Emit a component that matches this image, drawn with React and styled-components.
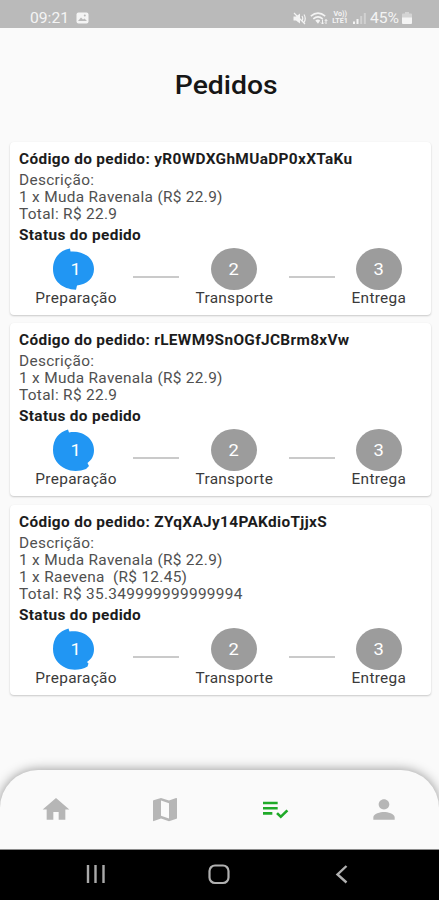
import React from "react";
import styled, { createGlobalStyle } from "styled-components";
import { MdHome, MdMap, MdPlaylistAddCheck, MdPerson } from "react-icons/md";

const GlobalStyle = createGlobalStyle`
  * { box-sizing: border-box; }
  body { margin: 0; background: #fafafa; font-family: Roboto, sans-serif; }
`;

const Screen = styled.div`
  display: flex;
  flex-direction: column;
  height: 900px;
  overflow: hidden;
  background: #fafafa;
`;

const StatusBar = styled.header`
  display: flex;
  justify-content: space-between;
  height: 28px;
  padding: 8px 27px 0 30px;
  background: #bababa;
  color: #f4f4f4;
  flex: none;
`;

const StatusGroup = styled.div`
  display: flex;
  align-items: center;
  height: 20px;
  gap: ${(p) => p.$gap}px;
`;

const StatusText = styled.span`
  width: ${(p) => p.$width}px;
  font-size: 14px;
  line-height: 20px;
  white-space: nowrap;

  span {
    display: inline-block;
    transform: scaleX(1.12);
    transform-origin: left;
  }
`;

const Heading = styled.h1`
  flex: none;
  margin: 0;
  padding: 41px 0 0 13px;
  height: 114px;
  font-size: 26px;
  font-weight: 500;
  line-height: 32px;
  text-align: center;
  color: #161616;

  span {
    display: inline-block;
    transform: scaleX(1.09);
  }
`;

const OrderList = styled.main`
  display: flex;
  flex-direction: column;
  gap: 8.4px;
  flex: 1;
  padding: 0 8px 0 10px;
`;

const OrderCard = styled.article`
  padding: 8px 9px 8px;
  border-radius: 4px;
  background: #fff;
  box-shadow: 0 1px 2px rgba(0, 0, 0, 0.2), 0 0 1px rgba(0, 0, 0, 0.04);
`;

const Line = styled.p`
  margin: 0;
  height: ${(p) => (p.$strong ? 18 : 17)}px;
  font-size: 14px;
  font-weight: ${(p) => (p.$strong ? 700 : 400)};
  line-height: ${(p) => (p.$strong ? 18 : 17)}px;
  letter-spacing: ${(p) => (p.$strong ? 0.3 : 0.28)}px;
  white-space: pre;
  color: ${(p) => (p.$strong ? "#1c1c1c" : "#505050")};
  transform: scaleX(1.1);
  transform-origin: left;
`;

const Details = styled.div`
  padding: 4px 0 3px;
`;

const Steps = styled.div`
  display: flex;
  gap: 16px;
  padding: 4px 0 0 16px;
`;

const Step = styled.div`
  display: flex;
  flex-direction: column;
  align-items: center;
  width: ${(p) => p.$width}px;
`;

const Disc = styled.div`
  display: grid;
  place-items: center;
  width: 46px;
  height: 42px;
  border-radius: 50%;
  background: ${(p) => (p.$active ? "none" : "#9c9c9c")};
  color: #fff;

  > * { grid-area: 1 / 1; }
`;

const DiscNumber = styled.span`
  z-index: 1;
  font-size: 17px;
  line-height: 20px;
  transform: scaleX(1.08);
`;

const StepLabel = styled.span`
  font-size: 14px;
  line-height: 17px;
  letter-spacing: 0.28px;
  white-space: nowrap;
  color: #3a3a3a;
  transform: scaleX(1.1);
`;

const Connector = styled.div`
  width: 46px;
  height: 2px;
  margin-top: 28px;
  background: #cacaca;
`;

const TabBar = styled.nav`
  display: grid;
  grid-template-columns: repeat(4, 1fr);
  place-items: center;
  flex: none;
  height: 80px;
  padding: 0 0 1px 1px;
  border-bottom: 1px solid #8c8c8c;
  border-radius: 38px 38px 0 0;
  background: #fafafa;
  box-shadow: 0 0 12px rgba(0, 0, 0, 0.42);
`;

const Tab = styled.div`
  display: flex;
  color: ${(p) => (p.$active ? "#1faa28" : "#b6b6b6")};

  svg { width: 32px; height: 31px; }
`;

const SystemBar = styled.footer`
  z-index: 1;
  display: flex;
  flex: none;
  gap: 102px;
  height: 50px;
  padding: 14px 0 0 86px;
  background: #000;
`;

const blobs = [
  "M17 .5 L17.5 3.5 C30 2.5 41 9.5 41 21 C41 30 34 36.5 24 37.5 L23 41.8 C9 41 0 33 0 21 C0 10 7 2 17 .5Z",
  "M15 .5 L16 3.5 C29 1 41 9 41 21 C41 27 38.5 31 34.5 34 L36 37 L33 40 C27 42.5 18 42.5 13 40 C5 36.5 0 30 0 21 C0 10 6 3 15 .5Z",
  "M15.5 .5 L16.5 3.5 C29 1.5 41 9 41 21 C41 27 38.5 31 34 34 L35.5 35.5 L34.5 38.5 C28 42.5 18 42.5 13 40 C5 36.5 0 30 0 21 C0 10 6 3 15.5 .5Z",
];

const orders = [
  {
    code: "yR0WDXGhMUaDP0xXTaKu",
    lines: ["1 x Muda Ravenala (R$ 22.9)", "Total: R$ 22.9"],
  },
  {
    code: "rLEWM9SnOGfJCBrm8xVw",
    lines: ["1 x Muda Ravenala (R$ 22.9)", "Total: R$ 22.9"],
  },
  {
    code: "ZYqXAJy14PAKdioTjjxS",
    lines: [
      "1 x Muda Ravenala (R$ 22.9)",
      "1 x Raevena  (R$ 12.45)",
      "Total: R$ 35.349999999999994",
    ],
  },
];

const steps = [
  { label: "Preparação", width: 82 },
  { label: "Transporte", width: 78 },
  { label: "Entrega", width: 55 },
];

function Order({ order, blob }) {
  return (
    <OrderCard>
      <Line $strong>{`Código do pedido: ${order.code}`}</Line>
      <Details>
        <Line>Descrição:</Line>
        {order.lines.map((line) => (
          <Line key={line}>{line}</Line>
        ))}
      </Details>
      <Line $strong>Status do pedido</Line>
      <Steps>
        {steps.map((step, i) => (
          <React.Fragment key={step.label}>
            {i > 0 && <Connector />}
            <Step $width={step.width}>
              <Disc $active={i === 0}>
                {i === 0 && (
                  <svg width="46" height="42" viewBox="0 0 46 42">
                    <path d={blob} fill="#2196f3" />
                  </svg>
                )}
                <DiscNumber>{i + 1}</DiscNumber>
              </Disc>
              <StepLabel>{step.label}</StepLabel>
            </Step>
          </React.Fragment>
        ))}
      </Steps>
    </OrderCard>
  );
}

const PictureIcon = () => (
  <svg width="13" height="12" viewBox="0 0 13 12">
    <rect x=".5" y=".5" width="12" height="11" rx="2" fill="#f4f4f4" />
    <path d="M2 9 L5 5.5 L7 7.5 L8.5 6.5 L11 9Z" fill="#bababa" />
    <circle cx="8.8" cy="3.6" r="1" fill="#bababa" />
  </svg>
);

const MutedIcon = () => (
  <svg width="13" height="13" viewBox="0 0 13 13" fill="none" stroke="#f4f4f4" strokeWidth="1.2">
    <path d="M.5 4.5 H3 L7 1.5 V11.5 L3 8.5 H.5Z" fill="#f4f4f4" stroke="none" />
    <path d="M9 4 Q10.5 6.5 9 9 M11 2.5 Q13.5 6.5 11 10.5 M1 1 L12 12" />
  </svg>
);

const WifiIcon = () => (
  <svg width="18" height="13" viewBox="0 0 18 13" fill="none" stroke="#f4f4f4" strokeWidth="1.6">
    <path d="M.8 4.2 Q8 -2 15.2 4.2 M3.3 6.8 Q8 2.8 12.7 6.8" />
    <path d="M5.3 8.6 Q8 6.5 10.2 8.6 L8 11.8Z" fill="#f4f4f4" stroke="none" />
    <path d="M12.5 7.5 V12 M11 10.5 L12.5 12 L14 10.5 M16 12 V7.5 M14.8 9 L16 7.5 L17.3 9" strokeWidth="1" />
  </svg>
);

const Volte = styled.div`
  display: flex;
  flex-direction: column;
  align-items: center;
  width: 17px;
  font-size: 6.5px;
  font-weight: 700;
  line-height: 7px;

  div { transform: scaleX(1.1); }
`;

const SignalIcon = () => (
  <svg width="13" height="12" viewBox="0 0 13 12" fill="#f4f4f4">
    <path d="M0 9.5h2V12H0zM3.5 7h2v5h-2z" />
    <path d="M7.2 4h2v8h-2zM10.8 1h2v11h-2z" opacity=".4" />
  </svg>
);

const BatteryIcon = () => (
  <svg width="10" height="12" viewBox="0 0 10 12" fill="#f4f4f4">
    <path d="M3 0h4v1.5h2a1 1 0 0 1 1 1V6H0V2.5a1 1 0 0 1 1-1h2z" opacity=".45" />
    <path d="M0 5.5h10V11a1 1 0 0 1-1 1H1a1 1 0 0 1-1-1z" />
  </svg>
);

const RecentsIcon = () => (
  <svg width="20" height="20" viewBox="0 0 20 20" stroke="#aaa" strokeWidth="2.4">
    <path d="M2 1V19M9.5 1V19M17.5 1V19" />
  </svg>
);

const HomeButtonIcon = () => (
  <svg width="22" height="21" viewBox="0 0 22 21" fill="none" stroke="#b0b0b0" strokeWidth="2.2">
    <rect x="1.5" y="1.5" width="19" height="17.5" rx="5.5" />
  </svg>
);

const BackIcon = () => (
  <svg width="16" height="20" viewBox="0 0 16 20" fill="none" stroke="#b0b0b0" strokeWidth="2.4">
    <path d="M14.5 2 L5.5 10.5 L14.5 18.5" />
  </svg>
);

export default function App() {
  return (
    <>
      <GlobalStyle />
      <Screen>
        <StatusBar>
          <StatusGroup $gap={7}>
            <StatusText $width={39}><span>09:21</span></StatusText>
            <PictureIcon />
          </StatusGroup>
          <StatusGroup $gap={4}>
            <MutedIcon />
            <WifiIcon />
            <Volte><div>Vo))</div><div>LTE1</div></Volte>
            <SignalIcon />
            <StatusText $width={28}><span>45%</span></StatusText>
            <BatteryIcon />
          </StatusGroup>
        </StatusBar>
        <Heading><span>Pedidos</span></Heading>
        <OrderList>
          {orders.map((order, i) => (
            <Order key={order.code} order={order} blob={blobs[i]} />
          ))}
        </OrderList>
        <TabBar>
          <Tab><MdHome preserveAspectRatio="none" /></Tab>
          <Tab><MdMap preserveAspectRatio="none" /></Tab>
          <Tab $active><MdPlaylistAddCheck preserveAspectRatio="none" /></Tab>
          <Tab><MdPerson preserveAspectRatio="none" /></Tab>
        </TabBar>
        <SystemBar>
          <RecentsIcon />
          <HomeButtonIcon />
          <BackIcon />
        </SystemBar>
      </Screen>
    </>
  );
}
